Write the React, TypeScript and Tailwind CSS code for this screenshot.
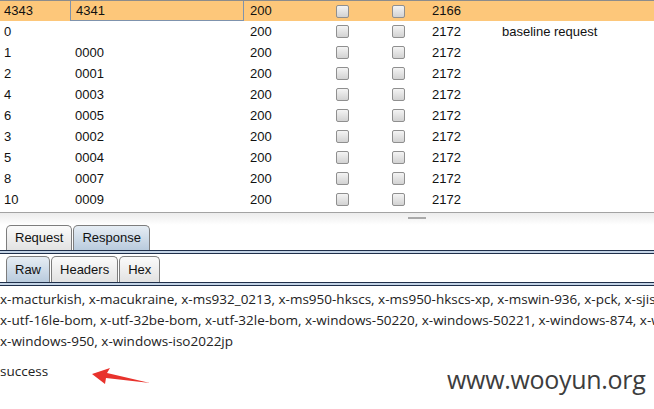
import React from "react";

type Row = {
  req: string;
  payload: string;
  status: string;
  length: string;
  comment?: string;
  selected?: boolean;
};

const rows: Row[] = [
  { req: "4343", payload: "4341", status: "200", length: "2166", selected: true },
  { req: "0", payload: "", status: "200", length: "2172", comment: "baseline request" },
  { req: "1", payload: "0000", status: "200", length: "2172" },
  { req: "2", payload: "0001", status: "200", length: "2172" },
  { req: "4", payload: "0003", status: "200", length: "2172" },
  { req: "6", payload: "0005", status: "200", length: "2172" },
  { req: "3", payload: "0002", status: "200", length: "2172" },
  { req: "5", payload: "0004", status: "200", length: "2172" },
  { req: "8", payload: "0007", status: "200", length: "2172" },
  { req: "10", payload: "0009", status: "200", length: "2172" },
];

const Checkbox = () => (
  <span className="block w-[13px] h-[13px] rounded-[2px] border border-[#8f8f8f] bg-gradient-to-b from-[#f4f4f4] to-[#d2d2d2]" />
);

const Tab = ({ label, active }: { label: string; active?: boolean }) => (
  <div
    className={
      "h-full flex items-center px-[8px] rounded-t-[5px] border border-b-0 border-[#7d7d7d] ml-px first:ml-0 " +
      (active
        ? "bg-gradient-to-b from-[#e6edf4] to-[#b9cbdd]"
        : "bg-gradient-to-b from-[#fbfbfb] to-[#e2e2e2]")
    }
  >
    {label}
  </div>
);

const Band = () => (
  <div className="h-[4px] border-t border-b border-[#1f2f4a] bg-[#c3d3e5]" />
);

export default function App() {
  return (
    <div className="relative w-[654px] h-[409px] overflow-hidden bg-white text-[13px] text-[#111] font-['Liberation_Sans',Arial,sans-serif]">
      {/* results table */}
      <div className="h-[213px] border-b border-[#a3a3a3]">
        {rows.map((r, i) => (
          <div
            key={i}
            className={
              "flex items-center h-[21px] " +
              (r.selected ? "bg-[#fdc77a] border-t border-[#8c8c8c]" : "")
            }
          >
            <span className="w-[70px] pl-[4px]">{r.req}</span>
            <span
              className={
                "w-[174px] h-full flex items-center pl-[5px] " +
                (r.selected ? "border border-t-0 border-[#7f93ad]" : "")
              }
            >
              {r.payload}
            </span>
            <span className="w-[92px] pl-[6px]">{r.status}</span>
            <span className="w-[56px]">
              <Checkbox />
            </span>
            <span className="w-[40px]">
              <Checkbox />
            </span>
            <span className="w-[70px]">{r.length}</span>
            <span className="flex-1">{r.comment}</span>
          </div>
        ))}
      </div>

      {/* splitter */}
      <div className="h-[12px] bg-gradient-to-b from-[#ececec] to-white flex justify-center pl-[179px]">
        <span className="mt-[4px] w-[18px] h-[2px] bg-[#a9a9a9]" />
      </div>

      {/* request / response tabs */}
      <div className="h-[25px] flex pl-[6px] text-[13px] text-[#111]">
        <Tab label="Request" />
        <Tab label="Response" active />
      </div>
      <Band />

      <div className="h-[28px] pt-[2px] flex pl-[6px] text-[13px] text-[#111]">
        <Tab label="Raw" active />
        <Tab label="Headers" />
        <Tab label="Hex" />
      </div>
      <Band />

      {/* response body */}
      <div className="pt-[3px] whitespace-nowrap leading-[21px] text-[13.5px] text-[#222] font-['Open_Sans',sans-serif]">
        <div>x-macturkish, x-macukraine, x-ms932_0213, x-ms950-hkscs, x-ms950-hkscs-xp, x-mswin-936, x-pck, x-sjis_0213,</div>
        <div>x-utf-16le-bom, x-utf-32be-bom, x-utf-32le-bom, x-windows-50220, x-windows-50221, x-windows-874, x-windows-949,</div>
        <div>x-windows-950, x-windows-iso2022jp</div>
        <div className="mt-[9px]">success</div>
      </div>

      {/* annotation arrow */}
      <svg className="absolute left-[88px] top-[366px]" width="64" height="22" viewBox="0 0 64 22">
        <polygon points="4,8 22,2 19,7 62,17 18,12 17,18" fill="#e8322c" />
      </svg>

      {/* watermark */}
      <div className="absolute left-[447px] top-[361px] text-[25px] text-[#3d3d3d] font-['Open_Sans',sans-serif] tracking-[-0.3px]">
        www.wooyun.org
      </div>
    </div>
  );
}
